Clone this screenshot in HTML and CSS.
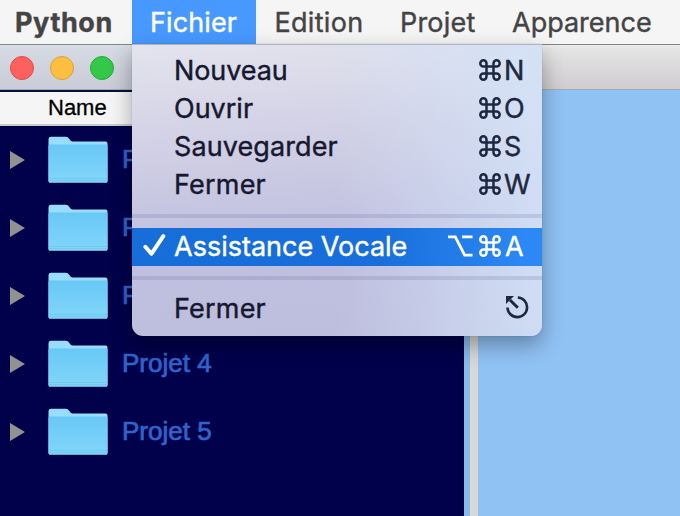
FILE: index.html
```html
<!DOCTYPE html>
<html lang="fr">
<head>
<meta charset="utf-8">
<title>Python</title>
<link rel="stylesheet" href="styles.css">
</head>
<body>
<svg class="defs" aria-hidden="true">
  <defs>
    <linearGradient id="folder-front" x1="0" y1="0" x2="0" y2="1">
      <stop offset="0" stop-color="#68c8f5"/><stop offset="1" stop-color="#82d6fb"/>
    </linearGradient>
    <symbol id="folder" viewBox="0 0 60 48">
      <path d="M.5 3.2Q.5.8 3 .8H18Q20 .8 21 2.400L22.500 4.500Q23.300 5.600 25 5.600H57.500Q59.500 5.600 59.500 7.600V45Q59.500 47 57.500 47H2.500Q.5 47 .5 45Z" fill="#98dcff"/>
      <path d="M.5 10.200Q.5 8.600 2 8.600H58Q59.500 8.600 59.500 10.200V45Q59.500 46.800 57.500 46.800H2.500Q.5 46.800 .5 45Z" fill="url(#folder-front)"/>
      <path d="M1 42.500H59M1 44.500H59" stroke="#69bfe4" stroke-width=".6"/>
      <path d="M1 46.500H59" stroke="#5cabcf" stroke-width="1"/>
    </symbol>
    <symbol id="cmd" viewBox="0 0 22 22">
      <path d="M7.500 7.500H14.500V14.500H7.500ZM7.500 7.500H4.400A3.100 3.100 0 1 1 7.500 4.400ZM14.500 7.500V4.400A3.100 3.100 0 1 1 17.600 7.500ZM14.500 14.500H17.600A3.100 3.100 0 1 1 14.500 17.600ZM7.500 14.500V17.600A3.100 3.100 0 1 1 4.400 14.500Z" fill="none" stroke="currentColor" stroke-width="2.500"/>
    </symbol>
  </defs>
</svg>
<header class="menubar">
  <span class="menu-title app"><span>Python</span></span>
  <span class="menu-title active"><span>Fichier</span></span>
  <span class="menu-title edition"><span>Edition</span></span>
  <span class="menu-title projet"><span>Projet</span></span>
  <span class="menu-title apparence"><span>Apparence</span></span>
</header>
<main class="window">
  <div class="titlebar">
    <div class="lights"><i class="red"></i><i class="amber"></i><i class="green"></i></div>
  </div>
  <div class="content">
    <section class="browser">
      <div class="column-head">Name</div>
      <ul class="tree">
        <li><i class="arrow"></i><svg class="folder"><use href="#folder"/></svg><span>Projet 1</span></li>
        <li><i class="arrow"></i><svg class="folder"><use href="#folder"/></svg><span>Projet 2</span></li>
        <li><i class="arrow"></i><svg class="folder"><use href="#folder"/></svg><span>Projet 3</span></li>
        <li><i class="arrow"></i><svg class="folder"><use href="#folder"/></svg><span>Projet 4</span></li>
        <li><i class="arrow"></i><svg class="folder"><use href="#folder"/></svg><span>Projet 5</span></li>
      </ul>
    </section>
    <div class="divider"></div>
    <section class="editor"></section>
  </div>
</main>
<nav class="dropdown">
  <div class="item"><span class="label nouveau">Nouveau</span><span class="keys"><svg><use href="#cmd"/></svg><b>N</b></span></div>
  <div class="item"><span class="label">Ouvrir</span><span class="keys"><svg><use href="#cmd"/></svg><b>O</b></span></div>
  <div class="item"><span class="label sauver">Sauvegarder</span><span class="keys"><svg><use href="#cmd"/></svg><b>S</b></span></div>
  <div class="item"><span class="label fermer">Fermer</span><span class="keys"><svg><use href="#cmd"/></svg><b>W</b></span></div>
  <hr>
  <div class="item selected">
    <svg class="check" viewBox="0 0 24 24"><path d="M2.400 12.800 8.400 19.800 20.300 2.200" fill="none" stroke="currentColor" stroke-width="4" stroke-linecap="round" stroke-linejoin="round"/></svg>
    <span class="label">Assistance Vocale</span>
    <span class="keys wide"><svg class="option" viewBox="0 0 25 22"><path d="M0 1.800H7.300L16.700 20.200H24.500M14 1.800H24.500" fill="none" stroke="currentColor" stroke-width="2.800"/></svg><svg><use href="#cmd"/></svg><b>A</b></span>
  </div>
  <hr>
  <div class="item"><span class="label fermer">Fermer</span><span class="keys esc"><svg viewBox="0 0 23 23"><path d="M11.800 1.500A9.800 9.800 0 1 1 1.500 11.500" fill="none" stroke="currentColor" stroke-width="2.600"/><path d="M4 4 11.800 11.800" stroke="currentColor" stroke-width="3"/><path d="M0 0H8L0 8Z" fill="currentColor"/></svg></span></div>
</nav>
</body>
</html>
```
FILE: styles.css
```css
* { box-sizing: border-box; }
body {
  margin: 0;
  width: 680px;
  height: 516px;
  overflow: hidden;
  display: flex;
  flex-direction: column;
  font-family: Inter, "Liberation Sans", sans-serif;
  font-size: 27px;
}
.defs { position: absolute; width: 0; height: 0; }
.menubar {
  height: 45px;
  flex: none;
  display: flex;
  background: #f5f5f5;
  border-bottom: 1px solid #858585;
  color: #444;
  white-space: nowrap;
  -webkit-text-stroke: .4px;
}
.menu-title { height: 44px; line-height: 46px; flex: none; letter-spacing: -.3px; }
.app { width: 132px; padding-left: 15px; font-weight: 700; letter-spacing: .6px; }
.active { width: 124px; padding-left: 18px; color: #fff; background: #4799ff; letter-spacing: .1px; }
.edition { width: 144px; padding-left: 18px; letter-spacing: .3px; }
.edition span { margin-left: .5px; }
.projet { width: 112px; letter-spacing: .2px; }
.apparence { letter-spacing: 0; }
.window { flex: 1; display: flex; flex-direction: column; }
.titlebar {
  height: 45px;
  flex: none;
  background: linear-gradient(90deg, #c0cbe06e, #c0cbe06e 132px, transparent 400px), linear-gradient(#ececec, #e5e4e5 4px, #cfcdcf);
  border-bottom: 1px solid #a9a9ac;
}
.lights { display: flex; gap: 16px; padding: 11px 10px; }
.lights i { width: 24px; height: 24px; border-radius: 50%; border: 1px solid; }
.red { background: #fc615d; border-color: #e14a48 !important; }
.amber { background: #fdbe41; border-color: #de9f35 !important; }
.green { background: #34c84a; border-color: #27aa35 !important; }
.content { flex: 1; display: flex; }
.browser { width: 464px; background: #00004b; border-top: 2px solid #00133f; }
.column-head {
  height: 34px;
  padding-left: 48px;
  background: #f5f5f5;
  border-bottom: 2px solid #cbcbcb;
  color: #000;
  font: 22px/31px "Liberation Sans", sans-serif;
  -webkit-text-stroke: .3px;
}
.tree { list-style: none; margin: 0; padding: 0; }
.tree li {
  height: 68px;
  padding-left: 10px;
  display: flex;
  align-items: center;
  color: #3064ca;
  font: 26px/66px "Liberation Sans", sans-serif;
  -webkit-text-stroke: .7px;
}
.tree span { padding-bottom: 2px; }
.arrow { border: solid transparent; border-width: 9px 0 9px 15px; border-left-color: #919191; }
.folder { width: 60px; height: 48px; margin: 0 14px 0 23px; }
.divider { width: 14px; border-left: 6px solid #8abbea; background: #d8d8d9; }
.editor { flex: 1; background: #90c2f4; }
.dropdown {
  position: absolute;
  left: 132px;
  top: 44px;
  width: 410px;
  height: 292px;
  padding-top: 7px;
  border-top: 1px solid #b1b3c3;
  border-radius: 0 0 11px 11px;
  overflow: hidden;
  color: #16182f;
  -webkit-text-stroke: .4px;
  background:
    linear-gradient(90deg, transparent 50%, #d3e3f8d0 98%),
    linear-gradient(175deg, #e3e4ee, #d1d0e5 32%, #c1c0e0 62%, #bcbddc);
  box-shadow: 0 0 1px #30405080, 0 9px 22px #00000055;
}
.item { height: 38px; display: flex; align-items: center; padding-left: 42px; line-height: 38px; position: relative; }
.label { white-space: nowrap; }
.nouveau { letter-spacing: -.1px; }
.sauver { letter-spacing: .1px; }
.fermer { letter-spacing: .2px; }
.keys { margin-left: auto; width: 63px; display: flex; align-items: center; gap: 3px; color: #1d2840; }
.keys svg { width: 22px; height: 22px; flex: none; margin-top: -2px; }
.keys b { font-weight: 400; }
.keys.wide { width: 94px; gap: 4px; color: #fff; }
.keys svg.option { width: 25px; margin-right: 2px; }
.keys.esc { width: 36px; }
.keys.esc svg { width: 23px; height: 23px; margin-top: -3px; }
.dropdown hr { height: 4px; margin: 10px 0; border: 0; background: #5864902f; }
.selected { color: #fff; background: linear-gradient(90deg, #166ed9, #186fdb 60%, #2c88f4 96%); padding-left: 11px; }
.check { width: 24px; height: 24px; margin: -3px 7px 0 0; }
```
